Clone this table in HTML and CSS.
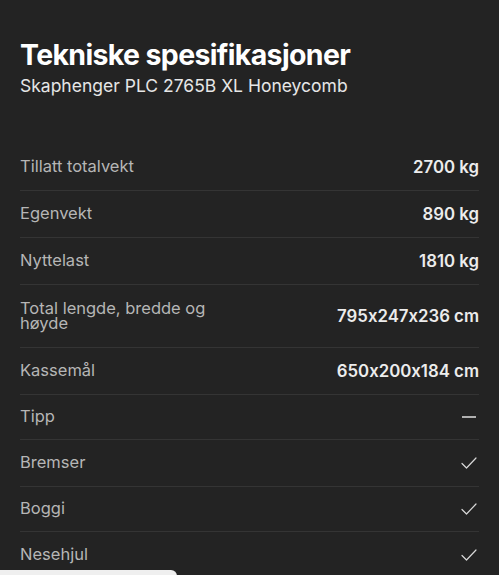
FILE: index.html
```html
<!DOCTYPE html>
<html lang="no">
<head>
    <meta charset="UTF-8">
    <meta name="viewport" content="width=device-width, initial-scale=1.0">
    <title>Tekniske spesifikasjoner</title>
    <link rel="stylesheet" href="styles.css">
</head>
<body>
    <div class="specs">
        <h1>Tekniske spesifikasjoner</h1>
        <div class="subtitle">Skaphenger PLC 2765B XL Honeycomb</div>

        <div class="list">
            <div class="row">
                <span class="label">Tillatt totalvekt</span>
                <span class="value">2700 kg</span>
            </div>
            <div class="row">
                <span class="label">Egenvekt</span>
                <span class="value">890 kg</span>
            </div>
            <div class="row">
                <span class="label">Nyttelast</span>
                <span class="value">1810 kg</span>
            </div>
            <div class="row tall">
                <span class="label">Total lengde, bredde og høyde</span>
                <span class="value">795x247x236 cm</span>
            </div>
            <div class="row">
                <span class="label">Kassemål</span>
                <span class="value">650x200x184 cm</span>
            </div>
            <div class="row short">
                <span class="label">Tipp</span>
                <span class="value"><span class="dash"></span></span>
            </div>
            <div class="row">
                <span class="label">Bremser</span>
                <span class="value">
                    <svg class="check" width="18" height="14" viewBox="0 0 18 14"><path d="M2 7.5 L6.5 12 L16 2" fill="none" stroke="#d8d8d8" stroke-width="1.2" stroke-linecap="round" stroke-linejoin="round"/></svg>
                </span>
            </div>
            <div class="row short">
                <span class="label">Boggi</span>
                <span class="value">
                    <svg class="check" width="18" height="14" viewBox="0 0 18 14"><path d="M2 7.5 L6.5 12 L16 2" fill="none" stroke="#d8d8d8" stroke-width="1.2" stroke-linecap="round" stroke-linejoin="round"/></svg>
                </span>
            </div>
            <div class="row">
                <span class="label">Nesehjul</span>
                <span class="value">
                    <svg class="check" width="18" height="14" viewBox="0 0 18 14"><path d="M2 7.5 L6.5 12 L16 2" fill="none" stroke="#d8d8d8" stroke-width="1.2" stroke-linecap="round" stroke-linejoin="round"/></svg>
                </span>
            </div>
        </div>
    </div>

    <div class="sheet"></div>
</body>
</html>
```

FILE: styles.css
```css
html, body {
    height: 100%;
}
body {
    margin: 0;
    background-color: #232323;
    font-family: Inter, 'Noto Sans', sans-serif;
    font-feature-settings: "calt" 0;
    color: #ececec;
    overflow: hidden;
}
.specs {
    padding: 37px 20px 0 20px;
}
.specs h1 {
    margin: 0;
    font-size: 28.5px;
    font-weight: 700;
    letter-spacing: -0.65px;
    line-height: 36px;
    color: #ffffff;
}
.subtitle {
    font-size: 17.5px;
    line-height: 26px;
    color: #e6e6e6;
}
.list {
    margin-top: 45px;
}
.row {
    display: flex;
    justify-content: space-between;
    align-items: center;
    min-height: 46px;
    border-bottom: 1px solid #343434;
}
.row.tall {
    min-height: 62px;
}
.row.short {
    min-height: 44px;
}
.label {
    font-size: 16.5px;
    line-height: 15.5px;
    color: #b6b6b6;
    max-width: 215px;
}
.value {
    font-size: 16.8px;
    font-weight: 600;
    color: #ececec;
    display: flex;
    align-items: center;
}
.dash {
    display: block;
    width: 14px;
    height: 1.5px;
    margin-right: 3px;
    background-color: #b0b0b0;
}
.check {
    display: block;
    margin-right: 1px;
}
.sheet {
    position: absolute;
    left: 0;
    bottom: -10px;
    width: 177px;
    height: 15px;
    background-color: #efefef;
    border-radius: 0 6px 0 0;
}
```
